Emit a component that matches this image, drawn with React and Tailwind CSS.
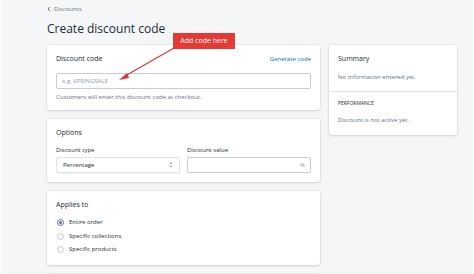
import React from 'react';

const card = 'bg-white rounded-[3px] shadow-[0_0_0_1px_rgba(63,63,68,0.05),0_1px_3px_0_rgba(63,63,68,0.15)]';

const Radio = ({ checked, label }) => (
  <div className="flex items-center gap-[5px] h-[13.5px]">
    <span
      className={`w-[7px] h-[7px] rounded-full border flex items-center justify-center ${
        checked ? 'border-[#5c6ac4] bg-white' : 'border-[#c4cdd5] bg-[#f9fafb]'
      }`}
    >
      {checked && <span className="w-[3px] h-[3px] rounded-full bg-[#5c6ac4]" />}
    </span>
    <span className="text-[6px] text-[#212b36]">{label}</span>
  </div>
);

export default function App() {
  return (
    <div
      className="relative w-[474px] h-[274px] overflow-hidden bg-[#fbfcfd] px-[2px]"
      style={{ fontFamily: '"Open Sans", "Noto Sans", sans-serif' }}
    >
      <div className="h-full bg-[#f4f6f8] pl-[45px] pt-[4px]">
        <div className="flex items-center gap-[3px] h-[10px] text-[6px] text-[#637381]">
          <svg width="4" height="6" viewBox="0 0 4 6" className="mt-[0.5px]">
            <path d="M3 0.8 L1 3 L3 5.2" fill="none" stroke="#637381" strokeWidth="1" />
          </svg>
          Discounts
        </div>
        <h1 className="mt-[5px] h-[20px] leading-[20px] text-[12px] text-[#212b36] font-medium">
          Create discount code
        </h1>

        <div className="flex gap-[9px] mt-[6px]">
          <div className="w-[273px] flex flex-col gap-[9px]">
            <div className={`${card} px-[9px] pt-[9px] pb-[8px]`}>
              <div className="flex justify-between items-center h-[10px]">
                <span className="text-[7px] text-[#212b36]">Discount code</span>
                <span className="text-[6px] text-[#006fbb]">Generate code</span>
              </div>
              <div className="mt-[9px] h-[16px] border border-[#c4cdd5] rounded-[2px] flex items-center px-[5px] text-[6px] text-[#919eab]">
                e.g. SPRINGSALE
              </div>
              <div className="mt-[3px] text-[6px] text-[#637381] leading-[10px]">
                Customers will enter this discount code at checkout.
              </div>
            </div>

            <div className={`${card} px-[9px] pt-[9px] pb-[9px]`}>
              <div className="text-[7px] text-[#212b36] h-[10px] leading-[10px]">Options</div>
              <div className="flex gap-[7px] mt-[8px]">
                <div className="flex-1">
                  <div className="text-[6px] text-[#212b36] h-[9px] leading-[9px]">Discount type</div>
                  <div className="mt-[2px] h-[16px] border border-[#dfe3e8] rounded-[2px] flex items-center justify-between px-[6px] text-[6px] text-[#212b36] shadow-[0_1px_0_rgba(22,29,37,0.05)]">
                    Percentage
                    <svg width="4" height="6" viewBox="0 0 4 6">
                      <path d="M0.6 2.2 L2 0.8 L3.4 2.2 M0.6 3.8 L2 5.2 L3.4 3.8" fill="none" stroke="#637381" strokeWidth="0.7" />
                    </svg>
                  </div>
                </div>
                <div className="flex-1">
                  <div className="text-[6px] text-[#212b36] h-[9px] leading-[9px]">Discount value</div>
                  <div className="mt-[2px] h-[16px] border border-[#c4cdd5] rounded-[2px] flex items-center justify-end px-[5px] text-[6px] text-[#919eab]">
                    %
                  </div>
                </div>
              </div>
            </div>

            <div className={`${card} px-[9px] pt-[9px] pb-[8px]`}>
              <div className="text-[7px] text-[#212b36] h-[10px] leading-[10px]">Applies to</div>
              <div className="mt-[6px] pl-[1px]">
                <Radio checked label="Entire order" />
                <Radio label="Specific collections" />
                <Radio label="Specific products" />
              </div>
            </div>

            <div className={`${card} h-[40px]`} />
          </div>

          <div className="w-[128px] self-start">
            <div className={card}>
              <div className="px-[9px] pt-[9px] pb-[9px]">
                <div className="text-[7px] text-[#212b36] h-[10px] leading-[10px]">Summary</div>
                <div className="mt-[8px] text-[6px] text-[#637381] leading-[10px]">No information entered yet.</div>
              </div>
              <div className="border-t border-[#dfe3e8] px-[9px] pt-[7px] pb-[10px]">
                <div className="text-[5px] text-[#212b36] uppercase h-[8px] leading-[8px]">Performance</div>
                <div className="mt-[8px] text-[6px] text-[#637381] leading-[10px]">Discount is not active yet.</div>
              </div>
            </div>
          </div>
        </div>
      </div>

      {/* annotation */}
      <div className="absolute left-[173px] top-[33px] w-[62px] h-[16px] bg-[#e53935] flex items-center justify-center text-white text-[7px]">
        Add code here
      </div>
      <svg className="absolute left-0 top-0" width="474" height="274">
        <line x1="174" y1="48" x2="125" y2="76" stroke="#d83a36" strokeWidth="1.3" />
        <path d="M119 80 L127 73 L129 78 Z" fill="#d83a36" />
      </svg>
    </div>
  );
}
